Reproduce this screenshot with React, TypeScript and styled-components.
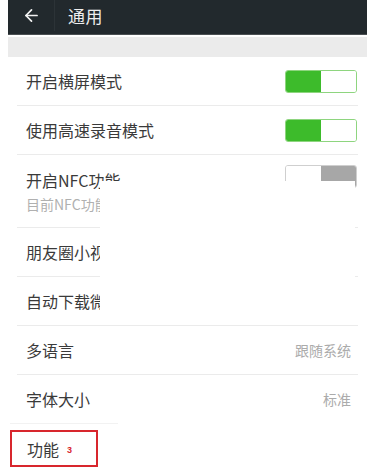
import styled, { createGlobalStyle } from "styled-components";
import { ArrowLeft } from "lucide-react";

const GlobalStyle = createGlobalStyle`
  html, body {
    margin: 0;
    padding: 0;
    background: #ffffff;
  }
  body {
    font-family: "Noto Sans CJK SC", "Noto Sans", sans-serif;
  }
`;

const Screen = styled.div`
  position: relative;
  width: 359px;
  height: 469px;
  margin-left: 8px;
  background: #ffffff;
  overflow: hidden;
`;

const Header = styled.div`
  display: flex;
  align-items: center;
  height: 35px;
  padding-bottom: 3px;
  background: #22292d;
  border-bottom: 1px solid #4a4f52;
  box-sizing: border-box;
`;

const BackButton = styled.div`
  display: flex;
  align-items: center;
  justify-content: center;
  width: 46px;
  height: 100%;
  color: #f2f2f2;
  border-right: 1px solid #2c3337;
`;

const Title = styled.div`
  margin-left: 13px;
  font-size: 17px;
  color: #eeeeee;
  letter-spacing: 0.5px;
`;

const Gap = styled.div`
  height: 20px;
  margin-top: 2px;
  background: #ebebeb;
`;

const List = styled.div`
  display: flex;
  flex-direction: column;
`;

const Row = styled.div<{ $tall?: boolean }>`
  display: flex;
  align-items: center;
  justify-content: space-between;
  height: ${(p) => (p.$tall ? 72 : 48)}px;
  margin: 0 9px;
  padding: 0 1px 0 9px;
  & + & {
    border-top: 1px solid #ebebeb;
  }
`;

const Texts = styled.div`
  display: flex;
  flex-direction: column;
  gap: 6px;
`;

const Label = styled.div`
  font-size: 16px;
  color: #3a3a3a;
  line-height: 20px;
`;

const Sub = styled.div`
  font-size: 14px;
  color: #b0b0b0;
  line-height: 16px;
`;

const Value = styled.div`
  font-size: 14px;
  color: #ababab;
  margin-right: 6px;
`;

const Toggle = styled.div<{ $on: boolean }>`
  display: flex;
  width: 72px;
  height: 23px;
  border-radius: 3px;
  overflow: hidden;
  box-sizing: border-box;
  border: 1px solid ${(p) => (p.$on ? "#8ed57f" : "#cfcfcf")};
  align-self: ${(p) => (p.$on ? "center" : "flex-start")};
  margin-top: ${(p) => (p.$on ? 0 : 10)}px;
`;

const Half = styled.div<{ $fill: string }>`
  flex: 1;
  background: ${(p) => p.$fill};
`;

const SectionRow = styled.div`
  display: flex;
  align-items: center;
  height: 49px;
  margin-left: 2px;
  border-top: 1px solid #f2f2f2;
  width: 108px;
`;

const Marked = styled.div`
  display: flex;
  align-items: center;
  gap: 8px;
  width: 88px;
  height: 37px;
  box-sizing: border-box;
  padding-left: 15px;
  border: 2px solid #d8262d;
`;

const Badge = styled.span`
  font-size: 9px;
  font-weight: 700;
  color: #d8262d;
  font-family: "Liberation Sans", sans-serif;
  margin-top: 2px;
`;

const Cover = styled.div`
  position: absolute;
  left: 92px;
  top: 181px;
  width: 255px;
  height: 137px;
  background: #ffffff;
`;

function Switch({ on }: { on: boolean }) {
  return (
    <Toggle $on={on}>
      <Half $fill={on ? "#3dbb2b" : "#ffffff"} />
      <Half $fill={on ? "#ffffff" : "#a7a7a7"} />
    </Toggle>
  );
}

export default function App() {
  return (
    <Screen>
      <GlobalStyle />
      <Header>
        <BackButton>
          <ArrowLeft size={19} strokeWidth={2.2} />
        </BackButton>
        <Title>通用</Title>
      </Header>
      <Gap />
      <List>
        <Row>
          <Label>开启横屏模式</Label>
          <Switch on />
        </Row>
        <Row>
          <Label>使用高速录音模式</Label>
          <Switch on />
        </Row>
        <Row $tall>
          <Texts>
            <Label>开启NFC功能</Label>
            <Sub>目前NFC功能</Sub>
          </Texts>
          <Switch on={false} />
        </Row>
        <Row>
          <Label>朋友圈小视频</Label>
        </Row>
        <Row>
          <Label>自动下载微信</Label>
        </Row>
        <Row>
          <Label>多语言</Label>
          <Value>跟随系统</Value>
        </Row>
        <Row>
          <Label>字体大小</Label>
          <Value>标准</Value>
        </Row>
      </List>
      <SectionRow>
        <Marked>
          <Label>功能</Label>
          <Badge>3</Badge>
        </Marked>
      </SectionRow>
      <Cover />
    </Screen>
  );
}
